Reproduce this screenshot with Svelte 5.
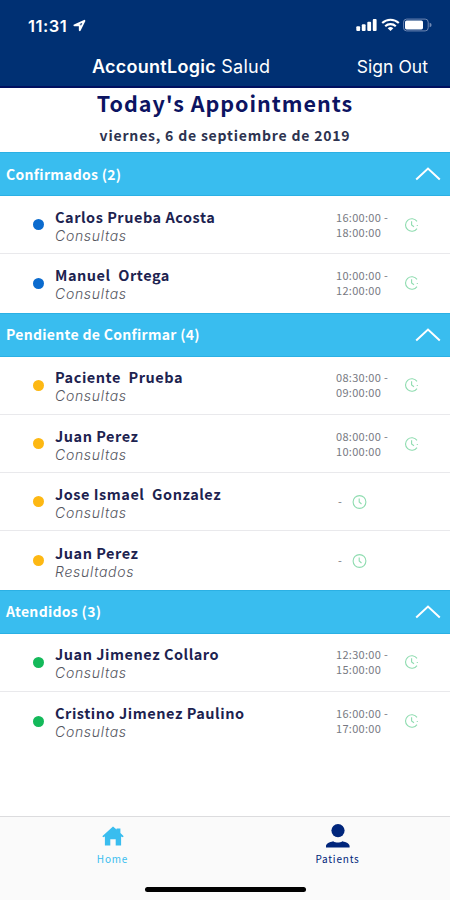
<script lang="ts">
  type Appointment = {
    name: string;
    reason: string;
    start?: string;
    end?: string;
  };

  type Section = {
    title: string;
    count: number;
    color: string;
    items: Appointment[];
  };

  let sections = $state<Section[]>([
    {
      title: "Confirmados",
      count: 2,
      color: "#0b6bce",
      items: [
        { name: "Carlos Prueba Acosta", reason: "Consultas", start: "16:00:00", end: "18:00:00" },
        { name: "Manuel  Ortega", reason: "Consultas", start: "10:00:00", end: "12:00:00" },
      ],
    },
    {
      title: "Pendiente de Confirmar",
      count: 4,
      color: "#fdb813",
      items: [
        { name: "Paciente  Prueba", reason: "Consultas", start: "08:30:00", end: "09:00:00" },
        { name: "Juan Perez", reason: "Consultas", start: "08:00:00", end: "10:00:00" },
        { name: "Jose Ismael  Gonzalez", reason: "Consultas" },
        { name: "Juan Perez", reason: "Resultados" },
      ],
    },
    {
      title: "Atendidos",
      count: 3,
      color: "#14b95a",
      items: [
        { name: "Juan Jimenez Collaro", reason: "Consultas", start: "12:30:00", end: "15:00:00" },
        { name: "Cristino Jimenez Paulino", reason: "Consultas", start: "16:00:00", end: "17:00:00" },
      ],
    },
  ]);

  let closed = $state<Record<string, boolean>>({});
  let tab = $state("home");

  function toggle(title: string) { closed[title] = !closed[title] }
</script>

{#snippet clock(open: boolean)}
  <svg class="clock" viewBox="0 0 16 16">
    {#if open}
      <path d="M13 4.400A6.300 6.300 0 1 0 13 11.600" />
      <path d="M7.600 4.200v3.800l2.400 1.700M13.300 8v.9" />
    {:else}
      <circle cx="7.500" cy="8" r="6.400" />
      <path d="M7.200 4.400v3.600l2.300 2" />
    {/if}
  </svg>
{/snippet}

<div class="phone">
  <header>
    <div class="status">
      <span class="time">11:31</span>
      <svg class="location" viewBox="0 0 13 13"><path d="M1.400 6.300 11.400 1.800 6.800 11.200V6.300Z" /></svg>
      <div class="signals">
        <svg width="22" height="14" viewBox="0 0 22 14" fill="#fff">
          <rect x="0.3" y="8.3" width="3.8" height="4.6" rx="1" />
          <rect x="5.8" y="6.2" width="3.8" height="6.7" rx="1" />
          <rect x="11.3" y="3.8" width="3.8" height="9.1" rx="1" />
          <rect x="16.8" y="1" width="3.8" height="11.9" rx="1" />
        </svg>
        <svg width="19" height="14" viewBox="0 0 19 14" fill="none" stroke="#fff" stroke-width="2.1">
          <path d="M1.2 5.1a12 12 0 0 1 16.6 0" />
          <path d="M4.2 8.3a7.6 7.6 0 0 1 10.6 0" />
          <path d="M6.7 10.2a4.2 4.2 0 0 1 5.6 0L9.5 13Z" fill="#fff" stroke="none" />
        </svg>
        <svg width="30" height="14" viewBox="0 0 30 14">
          <rect x="0.6" y="1.1" width="24.6" height="11.8" rx="3" fill="none" stroke="#7089b4" />
          <rect x="2" y="2.6" width="18" height="8.8" rx="1.6" fill="#fff" />
          <path d="M26.6 4.8q2 .5 2 2.2t-2 2.2Z" fill="#7089b4" />
        </svg>
      </div>
    </div>
    <div class="nav">
      <h1><b>AccountLogic</b> Salud</h1>
      <button class="signout">Sign Out</button>
    </div>
  </header>

  <div class="heading">
    <h2>Today's Appointments</h2>
    <p>viernes, 6 de septiembre de 2019</p>
  </div>

  <main>
    {#each sections as section}
      <button class="section" onclick={() => toggle(section.title)}>
        <span>{section.title} ({section.count})</span>
        <svg class="chevron" class:down={closed[section.title]} viewBox="0 0 26 14">
          <path d="M1.2 12.6 13 1.6 24.8 12.6" />
        </svg>
      </button>
      {#if !closed[section.title]}
        <ul>
          {#each section.items as item}
            <li>
              <span class="dot" style="background: {section.color}"></span>
              <div class="who">
                <div class="name">{item.name}</div>
                <div class="reason">{item.reason}</div>
              </div>
              {#if item.start}
                <div class="hours">{item.start} -<br />{item.end}</div>
                {@render clock(true)}
              {:else}
                <div class="hours empty">-</div>
                {@render clock(false)}
              {/if}
            </li>
          {/each}
        </ul>
      {/if}
    {/each}
  </main>

  <footer>
    <div class="tabs">
      <button class="tab" class:active={tab === "home"} onclick={() => (tab = "home")}>
        <svg width="24" height="24" viewBox="0 0 24 24">
          <path d="M12 2.4 15.6 5.6V4.4h3.8v4.7l3.3 3.1-1 1.1-1.6-.9V21.6h-5.4v-6.4H9.3v6.4H3.9V12.4l-1.6.9-1-1.1Z" />
        </svg>
        <span>Home</span>
      </button>
      <button class="tab" class:active={tab === "patients"} onclick={() => (tab = "patients")}>
        <svg width="24" height="24" viewBox="0 0 24 24">
          <circle cx="12" cy="6.6" r="6.6" />
          <path d="M0 23.4v-1.5c0-2.3 3.3-3.7 7.2-4.7 1.5 1 3 1.3 4.6 1.3s3.1-.3 4.6-1.3c3.9 1 7.2 2.4 7.2 4.7v1.5Z" />
        </svg>
        <span>Patients</span>
      </button>
    </div>
    <div class="indicator"></div>
  </footer>
</div>

<style>
  :global(body) {
    background: #fff;
  }

  .phone {
    display: flex;
    flex-direction: column;
    width: 450px;
    height: 900px;
    overflow: hidden;
    background: #fff;
    font-family: "Noto Sans CJK SC", "Noto Sans", sans-serif;
    color: #1d2350;
  }

  button {
    padding: 0;
    border: 0;
    background: none;
    font: inherit;
    color: inherit;
    text-align: left;
  }

  h1, h2, p, ul {
    margin: 0;
    padding: 0;
    list-style: none;
  }

  header {
    box-sizing: border-box;
    height: 88px;
    background: #003073;
    border-bottom: 2px solid #00105f;
    font-family: Inter, sans-serif;
    color: #fff;
  }

  .status {
    display: flex;
    align-items: center;
    height: 46px;
    padding: 4px 17px 0 28px;
    box-sizing: border-box;
  }

  .time {
    width: 43px;
    padding-top: 1px;
    font-size: 16.5px;
    font-weight: 600;
    letter-spacing: 0.5px;
  }

  .location {
    width: 13px;
    height: 13px;
    margin-left: 2px;
    fill: none;
    stroke: #fff;
    stroke-width: 1.9;
    stroke-linejoin: round;
  }

  .signals {
    display: flex;
    gap: 3px;
    margin-left: auto;
  }

  .nav {
    display: grid;
    grid-template-columns: 92px 1fr auto;
    align-items: center;
    height: 40px;
    padding-right: 22px;
  }

  h1 {
    grid-column: 2;
    font-size: 18px;
    font-weight: 400;
    letter-spacing: 0.26px;
    white-space: nowrap;
  }

  h1 b {
    font-weight: 600;
  }

  .signout {
    font-size: 17.5px;
    letter-spacing: 0.05px;
  }

  .heading {
    height: 64px;
    text-align: center;
  }

  h2 {
    height: 31px;
    line-height: 30px;
    font-size: 21.5px;
    font-weight: 700;
    color: #0c1462;
    letter-spacing: 0.98px;
  }

  .heading p {
    line-height: 32px;
    font-size: 14px;
    font-weight: 700;
    color: #2d3350;
    letter-spacing: 0.8px;
  }

  main {
    flex: 1;
  }

  .section {
    display: flex;
    align-items: center;
    justify-content: space-between;
    box-sizing: border-box;
    width: 100%;
    height: 44px;
    padding: 0 9px 0 6px;
    background: #39bdef;
    border-top: 1px solid #2bb0e4;
    border-bottom: 1px solid #2bb0e4;
    color: #fff;
    font-size: 14px;
    font-weight: 700;
    letter-spacing: 0.3px;
  }

  .section span {
    padding-bottom: 1px;
  }

  .chevron {
    width: 26px;
    height: 14px;
    fill: none;
    stroke: #fff;
    stroke-width: 2;
  }

  .chevron.down {
    transform: rotate(180deg);
  }

  li {
    display: flex;
    align-items: center;
    box-sizing: border-box;
    height: 58.3px;
    padding: 0 0 0 33px;
    border-bottom: 1px solid #e9e9ec;
  }

  li:last-child {
    border-bottom: 0;
  }

  .dot {
    width: 11px;
    height: 11px;
    border-radius: 50%;
  }

  .who {
    width: 281px;
    margin-left: 11px;
    padding-top: 2px;
  }

  .name {
    line-height: 20px;
    font-size: 14.5px;
    font-weight: 700;
    white-space: pre;
    letter-spacing: 0.53px;
  }

  .reason {
    line-height: 18px;
    font-family: Inter, sans-serif;
    font-size: 14px;
    font-style: italic;
    font-weight: 300;
    color: #55565f;
    letter-spacing: 0.7px;
  }

  .hours {
    width: 68px;
    line-height: 15px;
    font-size: 11px;
    color: #777982;
    letter-spacing: 0.3px;
  }

  .hours.empty {
    width: 14px;
    padding-left: 2px;
  }

  .clock {
    width: 16px;
    height: 16px;
    fill: none;
    stroke: #8fdcb0;
    stroke-width: 1.1;
  }

  footer {
    box-sizing: border-box;
    height: 84px;
    background: #fafafa;
    border-top: 1px solid #dcdcde;
  }

  .tabs {
    display: flex;
    height: 68px;
  }

  .tab {
    display: flex;
    flex: 1;
    flex-direction: column;
    align-items: center;
    padding-top: 7px;
    color: #00257b;
  }

  .tab svg {
    fill: currentColor;
  }

  .tab span {
    margin-top: 3px;
    line-height: 15px;
    font-size: 10px;
    font-weight: 400;
    letter-spacing: 0.8px;
  }

  .tab.active {
    color: #39bdef;
  }

  .indicator {
    width: 161px;
    height: 5px;
    margin: 2px auto 0;
    border-radius: 3px;
    background: #000;
  }
</style>
